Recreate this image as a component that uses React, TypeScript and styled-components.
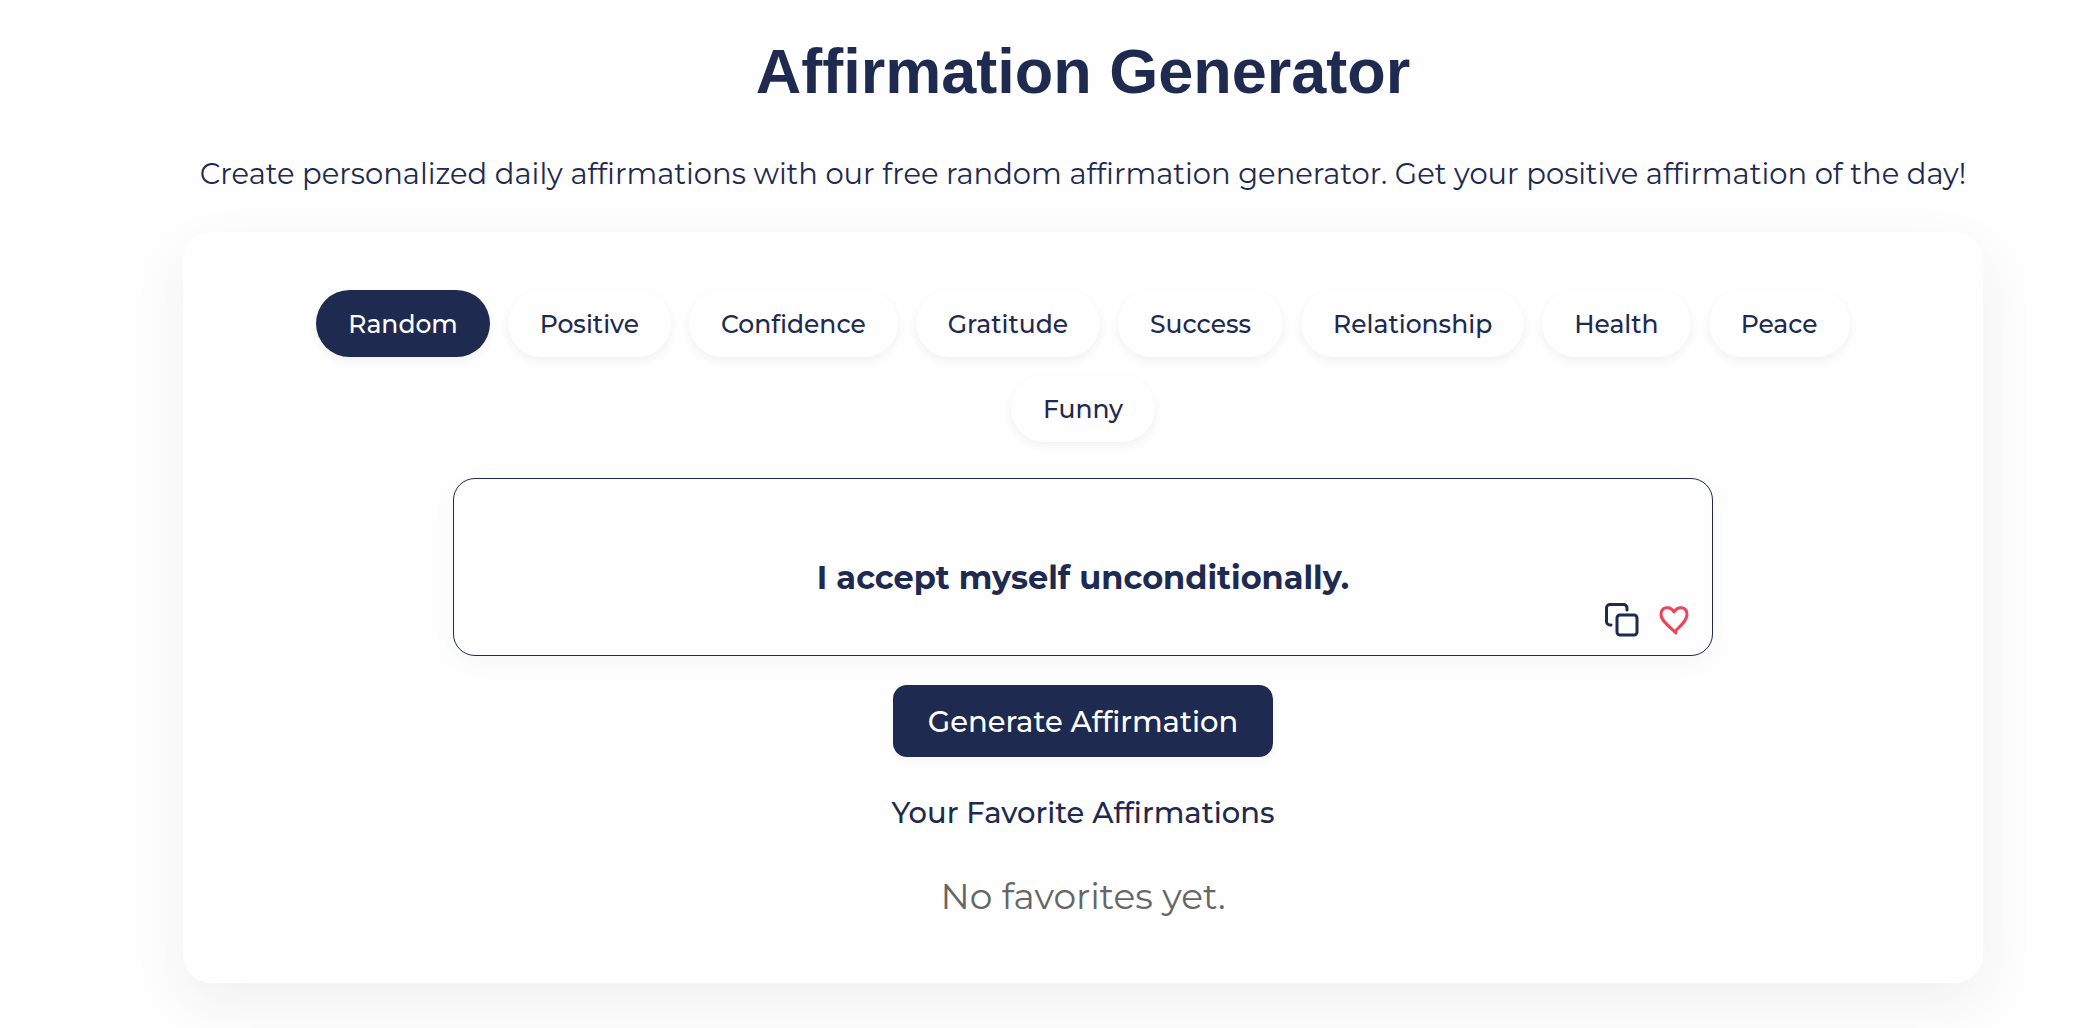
import React, { useState } from "react";
import styled, { createGlobalStyle } from "styled-components";

const navy = "#1e2a50";

const GlobalStyle = createGlobalStyle`
  *, *::before, *::after { box-sizing: border-box; }
  body {
    margin: 0;
    background: #fefefe;
    color: ${navy};
    font-family: Montserrat, Inter, "Liberation Sans", sans-serif;
  }
  button { font-family: inherit; cursor: pointer; }
`;

const Page = styled.main`
  display: flex;
  flex-direction: column;
  align-items: center;
  padding: 35px 0 45px 72px;
`;

const Title = styled.h1`
  margin: 0;
  font-family: "Liberation Sans", Arial, sans-serif;
  font-size: 63px;
  line-height: 72px;
  font-weight: 700;
  text-align: center;
`;

const Subtitle = styled.p`
  margin: 45px 0 36px;
  font-size: 29px;
  line-height: 44px;
  font-weight: 400;
  text-align: center;
`;

const Card = styled.section`
  display: flex;
  flex-direction: column;
  align-items: center;
  width: 100%;
  max-width: 1800px;
  padding: 58px 60px 60px;
  border-radius: 28px;
  background: #fefefe;
  box-shadow: 0 20px 60px rgba(0, 0, 0, 0.06);
`;

const Categories = styled.div`
  display: flex;
  flex-wrap: wrap;
  justify-content: center;
  gap: 18px;
`;

const Pill = styled.button<{ $active: boolean }>`
  height: 67px;
  padding: 0 32px;
  border: 0;
  border-radius: 34px;
  background: ${(p) => (p.$active ? navy : "#fefefe")};
  color: ${(p) => (p.$active ? "#fff" : navy)};
  font-size: 25px;
  font-weight: 500;
  box-shadow: 0 4px 10px rgba(0, 0, 0, 0.05);
`;

const Quote = styled.div`
  position: relative;
  width: 100%;
  max-width: 1260px;
  margin-top: 36px;
  padding: 77px 72px 55px;
  border: 1px solid ${navy};
  border-radius: 22px;
  box-shadow: 0 7px 28px rgba(0, 0, 0, 0.03);
`;

const QuoteText = styled.p`
  margin: 0;
  font-size: 32px;
  line-height: 44px;
  font-weight: 700;
  text-align: center;
`;

const Actions = styled.div`
  position: absolute;
  right: 20px;
  bottom: 16px;
  display: flex;
  gap: 15px;
`;

const IconButton = styled.button`
  display: flex;
  padding: 0;
  border: 0;
  background: none;
`;

const Generate = styled.button`
  height: 72px;
  margin-top: 29px;
  padding: 0 35px;
  border: 0;
  border-radius: 14px;
  background: ${navy};
  color: #fff;
  font-size: 29px;
  font-weight: 500;
  box-shadow: 0 4px 10px rgba(0, 0, 0, 0.03);
`;

const FavoritesTitle = styled.h2`
  margin: 34px 0 0;
  font-size: 29px;
  line-height: 44px;
  font-weight: 500;
`;

const Empty = styled.p`
  margin: 34px 0 0;
  color: #666;
  font-size: 36px;
  line-height: 54px;
  font-weight: 400;
`;

const categories = [
  "Random", "Positive", "Confidence", "Gratitude", "Success",
  "Relationship", "Health", "Peace", "Funny",
];

const CopyIcon = () => (
  <svg width="38" height="38" viewBox="0 0 38 38" fill="none" stroke={navy} strokeWidth="3" strokeLinecap="round" strokeLinejoin="round" aria-hidden="true">
    <rect x="14" y="14" width="20" height="20" rx="3" />
    <path d="M8 24H7a3.500 3.500 0 0 1-3.500-3.500V7A3.500 3.500 0 0 1 7 3.500h13.500A3.500 3.500 0 0 1 24 7v2" />
  </svg>
);

const HeartIcon = () => (
  <svg width="36" height="38" viewBox="0 0 36 38" fill="none" stroke="#f04259" strokeWidth="3" strokeLinecap="round" strokeLinejoin="round" aria-hidden="true">
    <path d="M20 32C14 26 5 20 5 13.500C5 6 14 4 18 11C22 4 31 6 31 13.500C31 20 24 25 18.500 31" />
  </svg>
);

export default function App() {
  const [active, setActive] = useState("Random");
  return (
    <>
      <GlobalStyle />
      <Page>
        <Title>Affirmation Generator</Title>
        <Subtitle>
          Create personalized daily affirmations with our free random affirmation generator. Get your positive affirmation of the day!
        </Subtitle>
        <Card>
          <Categories>
            {categories.map((name) => (
              <Pill key={name} type="button" $active={name === active} aria-pressed={name === active} onClick={() => setActive(name)}>
                {name}
              </Pill>
            ))}
          </Categories>
          <Quote>
            <QuoteText>I accept myself unconditionally.</QuoteText>
            <Actions>
              <IconButton type="button" aria-label="Copy"><CopyIcon /></IconButton>
              <IconButton type="button" aria-label="Favorite"><HeartIcon /></IconButton>
            </Actions>
          </Quote>
          <Generate type="button">Generate Affirmation</Generate>
          <FavoritesTitle>Your Favorite Affirmations</FavoritesTitle>
          <Empty>No favorites yet.</Empty>
        </Card>
      </Page>
    </>
  );
}
